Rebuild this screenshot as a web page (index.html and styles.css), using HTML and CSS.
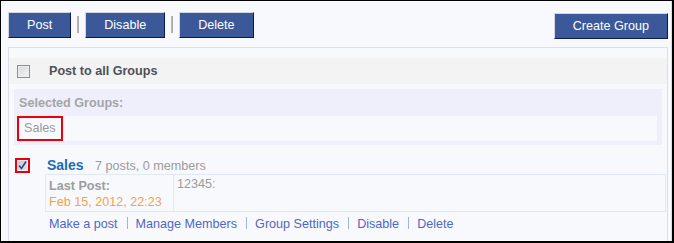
FILE: index.html
```html
<!DOCTYPE html>
<html lang="en">
<head>
<meta charset="UTF-8">
<title>Groups</title>
<link rel="stylesheet" href="styles.css">
</head>
<body>
<div class="frame">
	<div class="toolbar">
		<button class="btn">Post</button><span class="bar"></span>
		<button class="btn">Disable</button><span class="bar"></span>
		<button class="btn">Delete</button>
		<button class="btn btn-create">Create Group</button>
	</div>

	<div class="panel">
		<div class="all-groups">
			<span class="checkbox"></span>
			<span class="all-label">Post to all Groups</span>
		</div>

		<div class="selected">
			<div class="selected-title">Selected Groups:</div>
			<div class="selected-list"><span class="tag">Sales</span></div>
		</div>

		<div class="group">
			<span class="checkbox is-checked is-flagged">
				<svg width="11" height="11" viewBox="0 0 11 11"><path d="M2 5.5 L4.5 8.5 L9 1.5" fill="none" stroke="#34458a" stroke-width="1.6"/></svg>
			</span>
			<div class="group-body">
				<div class="group-head">
					<a class="group-name" href="#">Sales</a>
					<span class="group-stats">7 posts, 0 members</span>
				</div>
				<div class="last-post">
					<div class="lp-meta">
						<div class="lp-label">Last Post:</div>
						<div class="lp-date">Feb 15, 2012, 22:23</div>
					</div>
					<div class="lp-text">12345:</div>
				</div>
				<div class="group-links">
					<a href="#">Make a post</a><span class="sep"></span><a href="#">Manage Members</a><span class="sep"></span><a href="#">Group Settings</a><span class="sep"></span><a href="#">Disable</a><span class="sep"></span><a href="#">Delete</a>
				</div>
			</div>
		</div>
		<div class="divider"></div>
	</div>
</div>
</body>
</html>
```

FILE: styles.css
```css
html, body {
	margin: 0;
	padding: 0;
	background: #fff;
}
body {
	font-family: "Liberation Sans", Arial, sans-serif;
	font-size: 12.6px;
	color: #999;
}
a { text-decoration: none; }

.frame {
	box-sizing: border-box;
	width: 674px;
	height: 243px;
	overflow: hidden;
	background: #f7f9fd;
	border: solid #000;
	border-width: 1px 2px 2px 1px;
	box-shadow: inset -1px 0 #d9dce3;
	padding: 11px 4px 0 7px;
}

/* top buttons */
.toolbar {
	display: flex;
	align-items: center;
	height: 27px;
}
.btn {
	box-sizing: border-box;
	height: 26px;
	padding: 0 18px;
	border: 1px solid;
	border-color: #d3d7e1 #0c1b4a #0c1b4a #d3d7e1;
	background: #3b5998;
	color: #fff;
	font: 12.6px "Liberation Sans", Arial, sans-serif;
	align-self: flex-start;
}
.btn-create {
	margin-left: auto;
	margin-top: 1px;
}
.bar {
	width: 2px;
	height: 17px;
	margin: 0 6px 0 6px;
	background: linear-gradient(to right, #c8b4ae, #a9a9ab);
	align-self: center;
	position: relative;
	top: -1px;
}

/* panel */
.panel {
	margin-top: 8px;
	border: 1px solid #dcdfe6;
	padding-top: 10px;
	height: 300px;
}
.all-groups {
	display: flex;
	align-items: center;
	height: 26px;
	padding-left: 8px;
	background: #f3f3f3;
}
.all-label {
	margin-left: 19px;
	font-weight: bold;
	color: #4e5158;
}

.checkbox {
	box-sizing: border-box;
	display: inline-flex;
	align-items: center;
	justify-content: center;
	width: 13px;
	height: 13px;
	border: 1px solid #8d8f94;
	background: linear-gradient(135deg, #d6d7da, #f6f6f7);
	box-shadow: inset 0 0 0 1px #eceef2;
}
.checkbox.is-checked {
	background: linear-gradient(135deg, #c3c6cf, #e4e6ec);
}
.checkbox.is-flagged {
	outline: 2px solid #e8000c;
	outline-offset: -1px;
}

.selected {
	margin: 5px 5px 0 5px;
	padding: 0 5px 4px 3px;
	background: #efeffb;
}
.selected-title {
	padding: 6px 0 0 2px;
	line-height: 16px;
	margin-bottom: 5px;
	font-weight: bold;
	color: #a4a4a8;
}
.selected-list {
	height: 25px;
	background: #f8f9fd;
}
.tag {
	display: inline-block;
	box-sizing: border-box;
	height: 25px;
	line-height: 21px;
	padding: 0 5px;
	border: 2px solid #e8000c;
	color: #9b9b9b;
}

/* group row */
.group {
	display: flex;
	align-items: flex-start;
	margin-top: 11px;
}
.group .checkbox {
	margin: 3px 0 0 7px;
}
.group-body {
	flex: 1;
	margin: 0 1px 0 16px;
}
.group-head {
	line-height: 18px;
	height: 18px;
}
.group-name {
	font-size: 14px;
	font-weight: bold;
	color: #1a6db5;
	padding-left: 2px;
}
.group-stats {
	margin-left: 8px;
	color: #9b9b9b;
}

.last-post {
	display: flex;
	border: 1px solid #dfe8f3;
}
.lp-meta {
	box-sizing: border-box;
	width: 128px;
	padding: 3px 4px 1px 3px;
	border-right: 1px solid #dfe8f3;
	line-height: 16px;
}
.lp-label {
	font-weight: bold;
	color: #9c9c9c;
}
.lp-date { color: #f4a24e; }
.lp-text {
	padding: 1px 4px 0 3px;
	line-height: 16px;
	color: #9b9b9b;
}

.group-links {
	margin-top: 4px;
	padding-left: 4px;
	line-height: 16px;
}
.group-links a { color: #5066c8; }
.sep {
	display: inline-block;
	width: 1px;
	height: 12px;
	margin: 0 8px 0 9px;
	background: #9db3e2;
	vertical-align: -1px;
}

.divider {
	margin: 9px 0 0 36px;
	height: 1px;
	background: #c3c6cc;
}
```
